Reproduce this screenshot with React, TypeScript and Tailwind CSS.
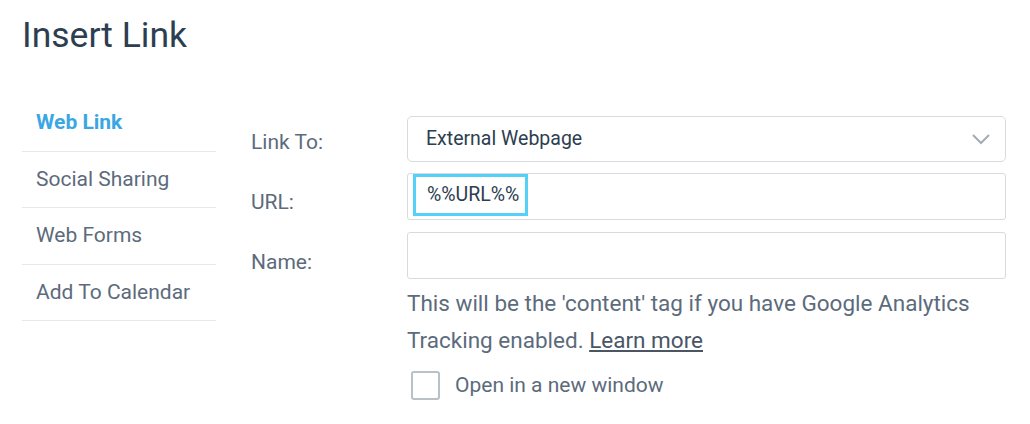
import React from "react";

export default function App() {
  const font = { fontFamily: "Roboto, 'Liberation Sans', sans-serif" };
  return (
    <div className="w-[1030px] h-[424px] bg-white pl-[22px] pr-[24px] pt-[14px]" style={font}>
      <h1 className="text-[35.5px] leading-[42px] text-[#2c3e50] font-normal">Insert Link</h1>
      <div className="flex mt-[39px]">
        <nav className="w-[194px] shrink-0">
          {["Web Link", "Social Sharing", "Web Forms", "Add To Calendar"].map((t, i) => (
            <div
              key={t}
              className={
                "h-[56.5px] flex items-center pl-[14px] border-b border-[#e6e8eb] text-[21px] " +
                (i === 0 ? "text-[#3aa7e2] font-bold" : "text-[#5c6b7c]")
              }
            >
              {t}
            </div>
          ))}
        </nav>
        <div className="flex-1 ml-[35px] pt-[21px]">
          <div className="flex items-start h-[46px]">
            <label className="w-[156px] text-[21px] leading-[24px] mt-[14px] text-[#5c6b7c]">Link To:</label>
            <div className="flex-1 h-[46px] border border-[#d7dbe0] rounded-[5px] flex items-center justify-between pl-[18px] pr-[14px]">
              <span className="text-[19.5px] text-[#2c3e50]">External Webpage</span>
              <svg width="20" height="12" viewBox="0 0 20 12" fill="none">
                <path d="M2 2l8 8 8-8" stroke="#a3acb6" strokeWidth="2" />
              </svg>
            </div>
          </div>
          <div className="flex items-start h-[47px] mt-[11px]">
            <label className="w-[156px] text-[21px] leading-[24px] mt-[17px] text-[#5c6b7c]">URL:</label>
            <div className="flex-1 h-[47px] border border-[#d7dbe0] rounded-[3px] flex items-start pl-[5px]">
              <div className="h-[42px] border-[3px] border-[#55d0f7] flex items-center pl-[11px] pr-[6px] text-[19.5px] text-[#2c3e50]">
                %%URL%%
              </div>
            </div>
          </div>
          <div className="flex items-start h-[47px] mt-[12px]">
            <label className="w-[156px] text-[21px] leading-[24px] mt-[18px] text-[#5c6b7c]">Name:</label>
            <div className="flex-1 h-[47px] border border-[#d7dbe0] rounded-[3px]" />
          </div>
          <div className="ml-[156px] mt-[6px] text-[22.5px] leading-[37px] text-[#5c6b7c]">
            This will be the 'content' tag if you have Google Analytics Tracking enabled.{" "}
            <a className="underline text-[#4a5666]">Learn more</a>
          </div>
          <div className="ml-[160px] mt-[11px] flex items-center">
            <div className="w-[29px] h-[29px] border-2 border-[#b8c0c8] rounded-[3px]" />
            <span className="ml-[15px] text-[21px] text-[#5c6b7c]">Open in a new window</span>
          </div>
        </div>
      </div>
    </div>
  );
}
